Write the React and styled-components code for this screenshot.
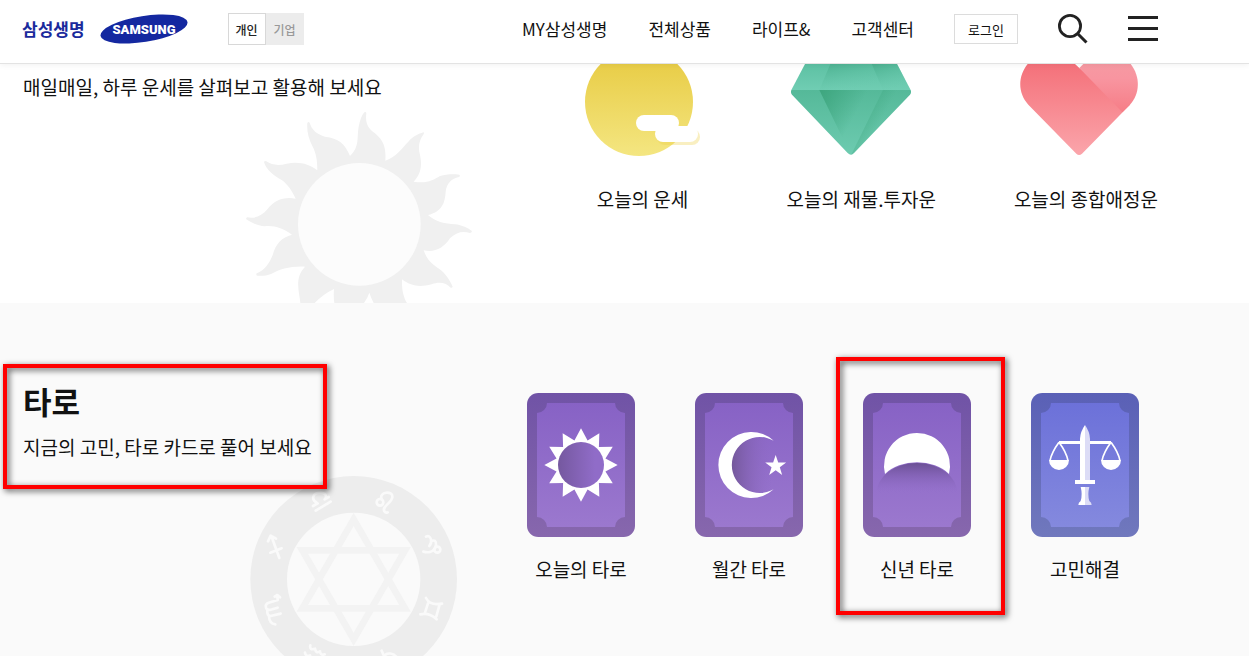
import React from "react";
import styled, { createGlobalStyle } from "styled-components";

const GlobalStyle = createGlobalStyle`
  *, *::before, *::after { box-sizing: border-box; }
  body {
    margin: 0;
    background: #fff;
    color: #111;
    font-family: "Noto Sans CJK KR", "Noto Sans", sans-serif;
  }
  a { color: inherit; text-decoration: none; }
  button { font: inherit; color: inherit; cursor: pointer; }
  ul { margin: 0; padding: 0; list-style: none; }
  svg { display: block; }
`;

const Page = styled.div`
  display: flex;
  flex-direction: column;
  min-height: 100vh;
`;

/* Header */

const Header = styled.header`
  position: sticky;
  top: 0;
  z-index: 5;
  display: flex;
  align-items: center;
  justify-content: space-between;
  height: 64px;
  padding: 0 91px 5px 22px;
  background: #fff;
  border-bottom: 1px solid #e3e3e3;
  box-shadow: 0 1px 6px rgba(0, 0, 0, 0.06);
`;

const HeaderGroup = styled.div`
  display: flex;
  align-items: center;
  gap: ${({ $gap }) => $gap}px;
`;

const Brand = styled.a`
  display: flex;
  align-items: center;
  gap: 15px;
  color: #1a2a9c;
  font-size: 17px;
  font-weight: 700;
  line-height: 28px;
`;

const Toggle = styled.div`
  display: flex;
`;

const ToggleButton = styled.button`
  width: 38px;
  height: 32px;
  padding: 0;
  border: 1px solid ${({ $active }) => ($active ? "#d8d8d8" : "#ececec")};
  background: ${({ $active }) => ($active ? "#fff" : "#ececec")};
  color: ${({ $active }) => ($active ? "#222" : "#999")};
  font-size: 12px;
  font-weight: 500;
`;

const Nav = styled.nav`
  display: flex;
  gap: 41px;
  font-size: 17px;
  line-height: 28px;
  white-space: nowrap;
`;

const LoginButton = styled.button`
  width: 64px;
  height: 30px;
  padding: 0;
  border: 1px solid #dcdcdc;
  background: #fff;
  font-size: 13px;
`;

const IconButton = styled.button`
  display: flex;
  padding: 0;
  border: 0;
  background: none;
`;

/* Sections */

const Section = styled.section`
  position: relative;
  display: flex;
  justify-content: space-between;
  overflow: hidden;
  padding: 0 ${({ $right }) => $right}px ${({ $bottom }) => $bottom}px 23px;
  background: ${({ $tint }) => ($tint ? "#fafafa" : "#fff")};
  flex: ${({ $grow }) => ($grow ? "1 0 auto" : "none")};
`;

const Backdrop = styled.svg`
  position: absolute;
  left: 230px;
  top: ${({ $top }) => $top}px;
`;

const Intro = styled.div`
  position: relative;
  align-self: flex-start;
  margin-top: ${({ $top }) => $top}px;
`;

const Title = styled.h2`
  margin: 0 0 10px;
  font-size: 31px;
  font-weight: 700;
  line-height: 44px;
`;

const Description = styled.p`
  margin: 0;
  font-size: 19px;
  line-height: 28px;
`;

const Menu = styled.ul`
  position: relative;
  display: flex;
  align-items: flex-start;
  gap: ${({ $gap }) => $gap}px;
  padding-top: ${({ $top }) => $top}px;
`;

const MenuItem = styled.li`
  position: relative;
  min-width: ${({ $width }) => $width}px;
`;

const MenuLink = styled.a`
  display: flex;
  flex-direction: column;
  align-items: center;
  gap: ${({ $gap }) => $gap}px;
  font-size: 19px;
  line-height: 28px;
  white-space: nowrap;
`;

const Highlight = styled.span`
  position: absolute;
  inset: ${({ $inset }) => $inset};
  border: 4px solid #f00;
  filter: drop-shadow(2px 2px 3px rgba(0, 0, 0, 0.7));
  pointer-events: none;
`;

/* Drawings */

const SamsungLogo = () => (
  <svg width="88" height="32" viewBox="0 0 88 32" role="img" aria-label="SAMSUNG">
    <ellipse cx="44" cy="16" rx="44" ry="13" fill="#1428a0" transform="rotate(-9 44 16)" />
    <text x="44" y="21" textAnchor="middle" fontFamily="Roboto, sans-serif" fontWeight="900" fontSize="13" fill="#fff">
      SAMSUNG
    </text>
  </svg>
);

const SearchIcon = () => (
  <svg width="30" height="30" viewBox="0 0 30 30" fill="none" stroke="#222">
    <circle cx="12" cy="12" r="10.6" strokeWidth="2.8" />
    <path d="M19.5 19.5 L28.5 28.5" strokeWidth="3" />
  </svg>
);

const MenuIcon = () => (
  <svg width="30" height="26" viewBox="0 0 30 26" fill="#222">
    <path d="M0 0h30v3H0zM0 11h30v3H0zM0 22h30v3H0z" />
  </svg>
);

const SunBackdrop = () => (
  <Backdrop $top={36} width="260" height="203" viewBox="0 0 780 609" aria-hidden="true">
    <path
      fill="#f0f0f0"
      d="M360 168 C390 140 380 110 386 80 C390 60 395 45 403 37 Q408 34 409 40 C405 70 415 85 435 100 C465 125 468 150 466 182
      C500 170 515 145 535 125 C550 108 565 102 580 97 Q584 98 580 104 C568 120 563 140 570 165 C578 200 570 225 551 245
      C590 252 610 240 630 228 C650 222 670 222 688 224 Q692 228 687 231 C665 235 650 250 647 275 C645 310 635 335 594 345
      C620 368 645 370 675 373 C695 375 715 385 726 393 Q726 398 720 399 C700 393 680 395 660 415 C640 445 615 458 581 451
      C592 485 615 498 635 512 C650 525 662 545 668 560 Q667 564 662 563 C650 550 630 543 605 553 C570 562 545 560 516 538
      C515 570 520 590 531 609 L431 609 Q424 596 418 578 Q412 596 402 609 L313 609 Q310 588 312 567 Q280 582 254 609 L211 609
      C208 575 192 535 225 500 C180 498 150 508 125 521 C108 528 95 528 82 527 Q77 525 80 520 C105 510 118 490 128 465
      C138 430 155 412 186 404 C160 385 130 375 105 379 C82 378 65 368 49 358 Q47 354 52 352 C75 357 95 348 112 328
      C135 300 160 290 197 296 C185 270 172 252 155 240 C130 226 108 208 102 186 Q104 181 109 184 C125 195 145 198 170 191
      C210 184 235 192 262 211 C262 180 258 158 247 138 C235 115 230 92 232 69 Q235 64 239 68 C245 90 262 103 285 110
      C325 115 345 130 360 168 Z"
    />
    <circle cx="388" cy="373" r="184" fill="#fcfcfc" />
  </Backdrop>
);

const ZodiacBackdrop = () => (
  <Backdrop $top={157} width="250" height="224" viewBox="0 0 750 672" aria-hidden="true">
    <circle cx="371" cy="358" r="310" fill="#ededed" />
    <circle cx="371" cy="358" r="200" fill="#fafafa" />
    <g fill="none" stroke="#f3f3f3" strokeWidth="20">
      <path d="M371 178 L525 445 L217 445 Z" />
      <path d="M371 538 L525 271 L217 271 Z" />
    </g>
    <g fill="none" stroke="#fafafa" strokeWidth="8" strokeLinecap="round" strokeLinejoin="round">
      <path d="M257 152 L302 125 M249 138 L263 130 C240 118 250 98 268 99 C288 97 292 110 284 118 L296 111" />
      <circle cx="450" cy="127" r="10" />
      <path d="M455 118 C445 95 490 90 487 112 C485 128 455 140 463 154 Q467 160 473 157" />
      <path d="M124 228 L148 294 M114 244 L122 227 L138 236 M121 278 L155 265" />
      <path d="M588 230 Q598 224 603 238 Q606 248 598 258 M603 244 Q619 236 618 254 Q616 272 600 276 Q592 278 580 275" />
      <circle cx="622" cy="269" r="9" />
      <path d="M134 410 L142 405 L150 412 M142 405 L143 420 L116 428 Q105 432 108 443 Q111 452 122 449 L143 443 M112 450 Q110 468 122 468 L152 461 M117 468 Q118 492 136 493" />
      <path d="M588 414 Q600 438 636 431 M571 463 Q598 457 620 478 M594 430 L584 461 M629 433 L619 469" />
      <path d="M241 556 Q238 572 255 566 Q258 582 270 574 Q272 588 284 583 M225 578 Q228 592 240 586 M455 572 L466 597 M464 590 C466 575 495 578 502 596" />
    </g>
  </Backdrop>
);

const FortuneIcon = () => (
  <svg width="116" height="92" viewBox="75 12 348 276" aria-hidden="true">
    <defs>
      <linearGradient id="gold" x1="0" y1="0" x2="0" y2="1">
        <stop offset="0.1" stopColor="#e8cc45" />
        <stop offset="1" stopColor="#f4e681" />
      </linearGradient>
    </defs>
    <circle cx="237" cy="126" r="162" fill="url(#gold)" />
    <rect x="291" y="207" width="129" height="48" rx="24" fill="#ecd04a" opacity="0.34" />
    <rect x="228" y="165" width="129" height="48" rx="24" fill="#fff" />
    <rect x="285" y="198" width="129" height="48" rx="24" fill="#fff" />
  </svg>
);

const WealthIcon = () => (
  <svg width="140" height="92" viewBox="693 12 420 276" aria-hidden="true">
    <defs>
      <linearGradient id="gemTop" x1="0" y1="0" x2="0" y2="1">
        <stop offset="0" stopColor="#5dc1a3" />
        <stop offset="1" stopColor="#70cdb3" />
      </linearGradient>
      <linearGradient id="gemSide" x1="0" y1="0" x2="0" y2="1">
        <stop offset="0" stopColor="#55b999" />
        <stop offset="1" stopColor="#6dcbb0" />
      </linearGradient>
      <linearGradient id="gemShade" x1="0" y1="0.1" x2="0.55" y2="0.4">
        <stop offset="0" stopColor="#3fa780" />
        <stop offset="1" stopColor="#3fa780" stopOpacity="0" />
      </linearGradient>
      <linearGradient id="gemTopShade" x1="0" y1="0" x2="0.5" y2="1">
        <stop offset="0" stopColor="#4bb08f" />
        <stop offset="1" stopColor="#6bcaaf" stopOpacity="0" />
      </linearGradient>
    </defs>
    <path d="M735 12 H1011 L1052 90 H694 Z" fill="url(#gemTop)" />
    <path d="M811 12 H935 L969 90 H778 Z" fill="url(#gemTopShade)" />
    <path d="M935 12 H1011 L1052 90 H969 Z" fill="url(#gemTopShade)" />
    <path d="M694 90 H1052 Q1055 98 1050 104 L882 279 Q873 290 863 279 L696 104 Q691 98 694 90 Z" fill="url(#gemSide)" />
    <path d="M778 90 H969 L873 286 Z" fill="url(#gemShade)" />
    <path d="M969 90 H1052 Q1055 98 1050 104 L882 279 L873 286 Z" fill="url(#gemShade)" />
  </svg>
);

const LoveIcon = () => (
  <svg width="132" height="92" viewBox="180 12 396 276" aria-hidden="true">
    <defs>
      <linearGradient id="heart" x1="0" y1="0" x2="0" y2="1">
        <stop offset="0" stopColor="#f4717a" />
        <stop offset="1" stopColor="#fba5ab" />
      </linearGradient>
      <linearGradient id="heartLobe" x1="0" y1="0" x2="0" y2="1">
        <stop offset="0" stopColor="#f699a2" />
        <stop offset="0.3" stopColor="#f895a0" />
        <stop offset="1" stopColor="#f67d86" />
      </linearGradient>
    </defs>
    <path d="M203 12 C174 48 172 98 205 134 L349 281 Q357 289 366 281 L510 134 L358 24 L345 12 Z" fill="url(#heart)" />
    <path d="M370 12 H512 C542 50 540 102 510 134 L487 157 L358 24 Z" fill="url(#heartLobe)" />
  </svg>
);

const palettes = {
  purple: { outer: ["#7053a6", "#8767ad"], inner: ["#8762c5", "#9b78ce"] },
  blue: { outer: ["#5a60b6", "#7078bd"], inner: ["#6c71d9", "#8489de"] },
};

const TarotCard = ({ id, tone = "purple", children }) => {
  const { outer, inner } = palettes[tone];
  return (
    <svg width="108" height="144" viewBox="0 0 324 432" aria-hidden="true">
      <defs>
        <linearGradient id={`${id}Outer`} x1="0" y1="0" x2="0" y2="1">
          <stop offset="0" stopColor={outer[0]} />
          <stop offset="1" stopColor={outer[1]} />
        </linearGradient>
        <linearGradient id={`${id}Inner`} x1="0" y1="0" x2="0" y2="1">
          <stop offset="0" stopColor={inner[0]} />
          <stop offset="1" stopColor={inner[1]} />
        </linearGradient>
      </defs>
      <rect width="324" height="432" rx="34" fill={`url(#${id}Outer)`} />
      <path
        d="M60 30 H264 A30 30 0 0 0 294 60 V372 A30 30 0 0 0 264 402 H60 A30 30 0 0 0 30 372 V60 A30 30 0 0 0 60 30 Z"
        fill={`url(#${id}Inner)`}
      />
      {children}
    </svg>
  );
};

const burst = (cx, cy, count, outerRadius, innerRadius) =>
  Array.from({ length: count * 2 }, (_, i) => {
    const radius = i % 2 ? innerRadius : outerRadius;
    const angle = (Math.PI * i) / count - Math.PI / 2;
    return `${(cx + radius * Math.cos(angle)).toFixed(1)},${(cy + radius * Math.sin(angle)).toFixed(1)}`;
  }).join(" ");

const SunCard = () => (
  <TarotCard id="sun">
    <defs>
      <linearGradient id="sunDisc">
        <stop offset="0" stopColor="#75589f" />
        <stop offset="0.8" stopColor="#906cc8" />
      </linearGradient>
    </defs>
    <polygon points={burst(162, 216, 12, 110, 76)} fill="#fff" />
    <circle cx="162" cy="216" r="69" fill="url(#sunDisc)" />
  </TarotCard>
);

const MoonCard = () => (
  <TarotCard id="moon">
    <defs>
      <linearGradient id="moonDisc">
        <stop offset="0" stopColor="#735799" />
        <stop offset="0.75" stopColor="#906cc8" stopOpacity="0" />
      </linearGradient>
    </defs>
    <circle cx="192" cy="216" r="84" fill="url(#moonDisc)" />
    <path d="M236 143 A99 99 0 1 0 236 289 A84 84 0 1 1 236 143 Z" fill="#fff" />
    <polygon points={burst(242, 219, 5, 33, 13)} fill="#fff" />
  </TarotCard>
);

const NewYearCard = () => (
  <TarotCard id="newYear">
    <defs>
      <linearGradient id="hill" x1="0" y1="0" x2="0" y2="1">
        <stop offset="0" stopColor="#6b5094" />
        <stop offset="1" stopColor="#906cc8" stopOpacity="0" />
      </linearGradient>
    </defs>
    <path d="M41 300 A121 90 0 0 1 283 300 Z" fill="url(#hill)" />
    <path d="M66 243 A99 99 0 1 1 258 243 A121 90 0 0 0 66 243 Z" fill="#fff" />
  </TarotCard>
);

const ScalesCard = () => (
  <TarotCard id="scales" tone="blue">
    <path d="M84 144 H240 V153 H84 Z" fill="#fff" />
    <path d="M162 96 Q148 116 147 137 V261 H162 Z" fill="#fff" />
    <path d="M162 96 Q176 116 177 137 V261 H162 Z" fill="#dcdcf6" />
    <path d="M132 261 H192 V273 H132 Z" fill="#fff" />
    <path d="M149 282 H162 V336 H142 Q142 328 149 324 Q155 305 149 282 Z" fill="#fff" />
    <path d="M175 282 H162 V336 H182 Q182 328 175 324 Q169 305 175 282 Z" fill="#dcdcf6" />
    <g fill="none" stroke="#fff" strokeWidth="5">
      <path d="M84 148 Q62 178 57 203 M84 148 Q106 178 111 203" />
      <path d="M240 148 Q218 178 213 203 M240 148 Q262 178 267 203" />
    </g>
    <path d="M54 201 H114 A30 30 0 0 1 54 201 Z M210 201 H270 A30 30 0 0 1 210 201 Z" fill="#fff" />
  </TarotCard>
);

/* Content */

const navItems = ["MY삼성생명", "전체상품", "라이프&", "고객센터"];

const fortunes = [
  { label: "오늘의 운세", Icon: FortuneIcon, width: 132 },
  { label: "오늘의 재물.투자운", Icon: WealthIcon, width: 148 },
  { label: "오늘의 종합애정운", Icon: LoveIcon, width: 142 },
];

const tarots = [
  { label: "오늘의 타로", Icon: SunCard },
  { label: "월간 타로", Icon: MoonCard },
  { label: "신년 타로", Icon: NewYearCard, highlighted: true },
  { label: "고민해결", Icon: ScalesCard },
];

export default function App() {
  return (
    <Page>
      <GlobalStyle />
      <Header>
        <HeaderGroup $gap={40}>
          <Brand href="#">
            삼성생명
            <SamsungLogo />
          </Brand>
          <Toggle>
            <ToggleButton type="button" $active>개인</ToggleButton>
            <ToggleButton type="button">기업</ToggleButton>
          </Toggle>
        </HeaderGroup>
        <HeaderGroup $gap={40}>
          <Nav>
            {navItems.map((item) => (
              <a href="#" key={item}>{item}</a>
            ))}
          </Nav>
          <LoginButton type="button">로그인</LoginButton>
          <IconButton type="button" aria-label="검색">
            <SearchIcon />
          </IconButton>
          <IconButton type="button" aria-label="전체 메뉴">
            <MenuIcon />
          </IconButton>
        </HeaderGroup>
      </Header>

      <Section $right={91} $bottom={90}>
        <SunBackdrop />
        <Intro $top={9}>
          <Description>매일매일, 하루 운세를 살펴보고 활용해 보세요</Description>
        </Intro>
        <Menu $gap={78} $top={0}>
          {fortunes.map(({ label, Icon, width }) => (
            <MenuItem key={label} $width={width}>
              <MenuLink href="#" $gap={29}>
                <Icon />
                {label}
              </MenuLink>
            </MenuItem>
          ))}
        </Menu>
      </Section>

      <Section $tint $grow $right={110} $bottom={72}>
        <ZodiacBackdrop />
        <Intro $top={76}>
          <Title>타로</Title>
          <Description>지금의 고민, 타로 카드로 풀어 보세요</Description>
          <Highlight $inset="-15px -15px -28px -20px" />
        </Intro>
        <Menu $gap={60} $top={90}>
          {tarots.map(({ label, Icon, highlighted }) => (
            <MenuItem key={label} $width={108}>
              <MenuLink href="#" $gap={18}>
                <Icon />
                {label}
              </MenuLink>
              {highlighted && <Highlight $inset="-36px -34px -32px -27px" />}
            </MenuItem>
          ))}
        </Menu>
      </Section>
    </Page>
  );
}
